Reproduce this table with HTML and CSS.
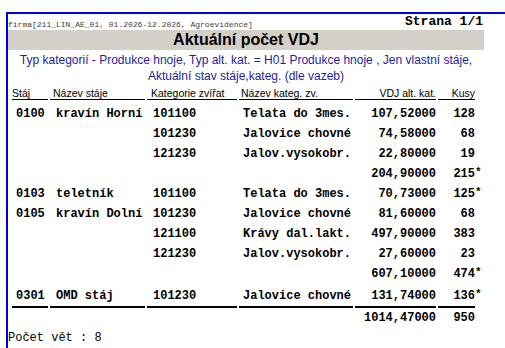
FILE: index.html
```html
<!DOCTYPE html>
<html lang="cs">
<head>
<meta charset="utf-8">
<title>Aktuální počet VDJ</title>
<link rel="stylesheet" href="styles.css">
</head>
<body>
<div class="frame">
  <div class="page">
    <div class="top">
      <span class="firm">firma[211_LIN_AE_01, 01.2026-12.2026, Agroevidence]</span>
      <span class="pageno">Strana 1/1</span>
    </div>
    <div class="band">Aktuální počet VDJ</div>
    <div class="subtitle">Typ kategorií - Produkce hnoje, Typ alt. kat. = H01 Produkce hnoje , Jen vlastní stáje,<br>Aktuální stav stáje,kateg. (dle vazeb)</div>

    <div class="grid head">
      <div class="h c1">Stáj</div>
      <div class="h c2">Název stáje</div>
      <div class="h c3">Kategorie zvířat</div>
      <div class="h c4">Název kateg. zv.</div>
      <div class="h c5 r">VDJ alt. kat.</div>
      <div class="h c6 r">Kusy</div>
    </div>

    <div class="rows">
      <div class="grid row first">
        <div class="c1">0100</div><div class="c2">kravín Horní</div><div class="c3">101100</div><div class="c4">Telata do 3mes.</div><div class="c5 r">107,52000</div><div class="c6 r">128</div>
      </div>
      <div class="grid row">
        <div class="c1"></div><div class="c2"></div><div class="c3">101230</div><div class="c4">Jalovice chovné</div><div class="c5 r">74,58000</div><div class="c6 r">68</div>
      </div>
      <div class="grid row">
        <div class="c1"></div><div class="c2"></div><div class="c3">121230</div><div class="c4">Jalov.vysokobr.</div><div class="c5 r">22,80000</div><div class="c6 r">19</div>
      </div>
      <div class="grid row">
        <div class="c1"></div><div class="c2"></div><div class="c3"></div><div class="c4"></div><div class="c5 r">204,90000</div><div class="c6 r">215<span class="star">*</span></div>
      </div>
      <div class="grid row">
        <div class="c1">0103</div><div class="c2">teletník</div><div class="c3">101100</div><div class="c4">Telata do 3mes.</div><div class="c5 r">70,73000</div><div class="c6 r">125<span class="star">*</span></div>
      </div>
      <div class="grid row">
        <div class="c1">0105</div><div class="c2">kravín Dolní</div><div class="c3">101230</div><div class="c4">Jalovice chovné</div><div class="c5 r">81,60000</div><div class="c6 r">68</div>
      </div>
      <div class="grid row">
        <div class="c1"></div><div class="c2"></div><div class="c3">121100</div><div class="c4">Krávy dal.lakt.</div><div class="c5 r">497,90000</div><div class="c6 r">383</div>
      </div>
      <div class="grid row">
        <div class="c1"></div><div class="c2"></div><div class="c3">121230</div><div class="c4">Jalov.vysokobr.</div><div class="c5 r">27,60000</div><div class="c6 r">23</div>
      </div>
      <div class="grid row">
        <div class="c1"></div><div class="c2"></div><div class="c3"></div><div class="c4"></div><div class="c5 r">607,10000</div><div class="c6 r">474<span class="star">*</span></div>
      </div>
      <div class="grid row last">
        <div class="c1 ul">0301</div><div class="c2 ul">OMD stáj</div><div class="c3 ul">101230</div><div class="c4 ul">Jalovice chovné</div><div class="c5 r ul">131,74000</div><div class="c6 r ul">136<span class="star">*</span></div>
      </div>
      <div class="grid row total">
        <div class="c1"></div><div class="c2"></div><div class="c3"></div><div class="c4"></div><div class="c5 r">1014,47000</div><div class="c6 r">950</div>
      </div>
    </div>

    <div class="count">Počet vět : 8</div>
  </div>
</div>
</body>
</html>
```

FILE: styles.css
```css
html, body {
  margin: 0;
  padding: 0;
  background: #ffffff;
}

body {
  width: 505px;
  height: 348px;
  overflow: hidden;
}

.frame {
  margin: 12px 0 0 6px;
  height: 336px;
  border-top: 2px solid #0000e6;
  border-left: 2px solid #0000e6;
  box-sizing: border-box;
}

.page {
  width: 476px;
  padding-top: 1px;
}

.top {
  display: flex;
  justify-content: space-between;
  align-items: flex-end;
  height: 14px;
}

.firm {
  font-family: "Liberation Mono", "Courier New", monospace;
  font-size: 8px;
  line-height: 9px;
  color: #404040;
}

.pageno {
  font-family: "Liberation Mono", "Courier New", monospace;
  font-size: 13px;
  font-weight: bold;
  line-height: 14px;
  padding-right: 1px;
}

.band {
  margin-top: 1px;
  height: 20px;
  background: #d4d0c8;
  font-family: "Liberation Sans", Arial, sans-serif;
  font-size: 16px;
  font-weight: bold;
  line-height: 20px;
  text-align: center;
  color: #000;
}

.subtitle {
  margin-top: 2px;
  font-family: "Liberation Sans", Arial, sans-serif;
  font-size: 12px;
  line-height: 16px;
  text-align: center;
  color: #1e1e9e;
}

.grid {
  display: grid;
  grid-template-columns: 36px 95px 90px 114px 81px 37px;
  column-gap: 2px;
  padding-left: 4px;
}

.head {
  margin-top: 3px;
}

.h {
  font-family: "Liberation Sans", Arial, sans-serif;
  font-size: 10.5px;
  line-height: 12px;
  border-bottom: 1px solid #000;
  white-space: nowrap;
}

.head .c2 { padding-left: 3px; }
.head .c3 { padding-left: 4px; }
.head .c4 { padding-left: 2px; }

.rows {
  margin-top: 4px;
}

.row > div {
  font-family: "Liberation Mono", "Courier New", monospace;
  font-size: 12px;
  font-weight: bold;
  line-height: 20px;
  height: 20px;
  white-space: nowrap;
}

.row .c1 { padding-left: 4px; }
.row .c2 { padding-left: 6px; }
.row .c3 { padding-left: 6px; }
.row .c4 { padding-left: 4px; }

.r { text-align: right; }

.star {
  display: inline-block;
  width: 7px;
  margin-right: -7px;
  text-align: left;
  font-size: 11px;
  vertical-align: top;
  line-height: 17px;
}

.row.last {
  margin-top: 2px;
}

.row .ul {
  border-bottom: 2px solid #000;
}

.count {
  margin-top: 0;
  font-family: "Liberation Mono", "Courier New", monospace;
  font-size: 12px;
  line-height: 20px;
  color: #000;
}
```
